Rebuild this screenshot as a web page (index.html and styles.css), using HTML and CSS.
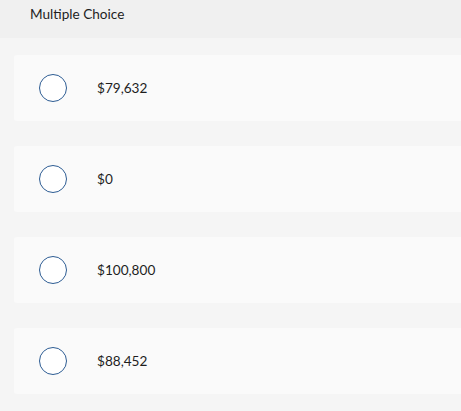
FILE: index.html
```html
<!DOCTYPE html>
<html>
<head>
<meta charset="utf-8">
<link rel="stylesheet" href="styles.css">
</head>
<body>
<div class="header">Multiple Choice</div>
<div class="choices">
  <div class="choice"><span class="radio"></span><span class="label">$79,632</span></div>
  <div class="choice"><span class="radio"></span><span class="label">$0</span></div>
  <div class="choice"><span class="radio"></span><span class="label">$100,800</span></div>
  <div class="choice"><span class="radio"></span><span class="label">$88,452</span></div>
</div>
</body>
</html>
```
FILE: styles.css
```css
html, body {
  margin: 0;
  padding: 0;
  background: #f5f5f5;
  font-family: "Lato", "Liberation Sans", sans-serif;
  color: #1e1e1e;
  overflow: hidden;
}
.header {
  height: 38px;
  background: #f0f0f0;
  padding-left: 30px;
  font-size: 13.6px;
  line-height: 29px;
  box-sizing: border-box;
}
.choices {
  display: flex;
  flex-direction: column;
  gap: 25px;
  padding: 17px 0 0 14px;
}
.choice {
  height: 66px;
  margin-right: -10px;
  background: #fafafa;
  border-radius: 3px;
  display: flex;
  align-items: center;
  padding-left: 25px;
}
.radio {
  width: 26px;
  height: 26px;
  border: 1px solid #2d5c93;
  border-radius: 50%;
  background: #fff;
  flex: none;
}
.label {
  margin-left: 30px;
  font-size: 13.6px;
}
```
